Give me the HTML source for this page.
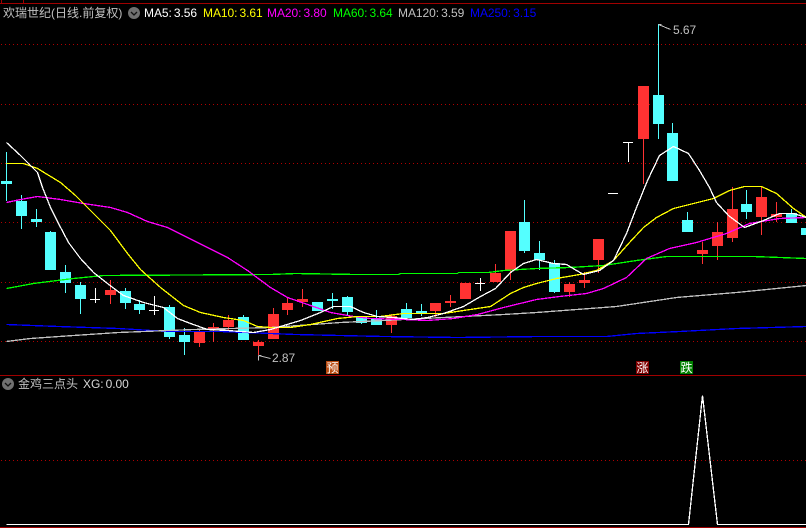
<!DOCTYPE html>
<html><head><meta charset="utf-8">
<style>
html,body{margin:0;padding:0;background:#000;width:806px;height:528px;overflow:hidden}
#w{position:relative;width:806px;height:528px;background:#000;overflow:hidden}
svg{position:absolute;left:0;top:0}
.t{position:absolute;white-space:nowrap;font:12px/14px "WenQuanYi Zen Hei","Liberation Sans","Noto Sans CJK SC",sans-serif;color:#c0c0c0}
.l{font-family:"Liberation Sans","WenQuanYi Zen Hei",sans-serif;word-spacing:-1.2px;letter-spacing:-.05px}
.b{position:absolute;width:13px;height:13px;top:361px;color:#fff;font:12px/13px "WenQuanYi Zen Hei","Noto Sans CJK SC",sans-serif;text-align:center}
</style></head><body><div id="w">
<svg width="806" height="528" viewBox="0 0 806 528" shape-rendering="crispEdges">
<defs><pattern id="d" width="4" height="1" patternUnits="userSpaceOnUse" x="1" y="0"><rect width="1" height="1" fill="#b00000"/></pattern></defs>
<path fill="#a00000" d="M0 3h806v1H0zM1 0h1v3H1zM23 0h1v3h-1zM0 375h806v1H0zM0 527h806v1H0z"/>
<g fill="url(#d)">
<rect x="0" y="44" width="806" height="1"/><rect x="0" y="104" width="806" height="1"/><rect x="0" y="163" width="806" height="1"/><rect x="0" y="222" width="806" height="1"/><rect x="0" y="282" width="806" height="1"/><rect x="0" y="341" width="806" height="1"/><rect x="0" y="460" width="806" height="1"/>
</g>
<path fill="#54ffff" d="M6 152h1v49h-1zM1 181h11v3H1zM21 195h1v34h-1zM16 201h11v15H16zM36 209h1v18h-1zM31 219h11v3H31zM50 231h1v2h-1zM45 232h11v38H45zM65 265h1v28h-1zM60 272h11v11H60zM80 282h1v32h-1zM75 285h11v14H75zM125 288h1v21h-1zM120 291h11v12h-11zM139 300h1v14h-1zM134 304h11v6h-11zM169 305h1v34h-1zM164 307h11v30h-11zM184 328h1v27h-1zM179 335h11v7h-11zM243 315h1v25h-1zM238 317h11v23h-11zM312 302h11v9h-11zM332 293h1v16h-1zM327 299h11v2h-11zM347 296h1v20h-1zM342 297h11v15h-11zM361 317h1v7h-1zM356 317h11v6h-11zM376 310h1v15h-1zM371 318h11v7h-11zM406 303h1v16h-1zM401 309h11v9h-11zM421 304h1v12h-1zM416 311h11v3h-11zM524 200h1v53h-1zM519 222h11v29h-11zM539 241h1v29h-1zM534 253h11v7h-11zM554 260h1v33h-1zM549 263h11v29h-11zM658 24h1v115h-1zM653 95h11v29h-11zM672 123h1v10h-1zM667 133h11v48h-11zM687 212h1v8h-1zM682 220h11v12h-11zM746 190h1v29h-1zM741 204h11v8h-11zM791 209h1v4h-1zM786 213h11v10h-11zM801 228h5v7h-5z"/>
<path fill="#ff3232" d="M110 280h1v24h-1zM105 290h11v5h-11zM199 330h1v17h-1zM194 332h11v11h-11zM213 323h1v19h-1zM208 327h11v3h-11zM228 315h1v15h-1zM223 320h11v7h-11zM258 340h1v15h-1zM253 342h11v4h-11zM273 308h1v6h-1zM268 314h11v25h-11zM287 297h1v18h-1zM282 303h11v7h-11zM302 289h1v18h-1zM297 299h11v3h-11zM391 314h1v19h-1zM386 316h11v9h-11zM435 303h1v14h-1zM430 303h11v8h-11zM450 295h1v12h-1zM445 301h11v2h-11zM460 283h11v16h-11zM495 264h1v18h-1zM490 273h11v9h-11zM510 270h1v10h-1zM505 231h11v39h-11zM569 282h1v15h-1zM564 284h11v8h-11zM584 272h1v16h-1zM579 280h11v3h-11zM598 260h1v13h-1zM593 239h11v21h-11zM643 139h1v45h-1zM638 86h11v53h-11zM702 242h1v22h-1zM697 250h11v4h-11zM717 222h1v38h-1zM712 232h11v14h-11zM732 187h1v55h-1zM727 209h11v29h-11zM761 187h1v48h-1zM756 197h11v20h-11zM776 202h1v20h-1zM771 214h11v3h-11z"/>
<path fill="#fff" d="M90 299h10v1H90zM95 288h1v15h-1zM149 310h10v1h-10zM154 296h1v19h-1zM475 283h10v1h-10zM480 278h1v13h-1zM608 193h10v1h-10zM623 142h10v1h-10zM628 142h1v20h-1z"/>
<g fill="none" stroke-width="1.3" transform="translate(.5 .5)">
<polyline stroke="#0000ff" points="6,324 58,326 118,328 167,331 220,331 270,333 295,334 383,336 457,337 540,336 606,336 636,333 679,331 736,328 806,326"/>
<polyline stroke="#c0c0c0" points="6,341 30,338 73,335 118,332 193,329 270,327 340,322 383,320 443,317 503,314 536,312 576,309 616,306 676,297 736,292 806,285"/>
<polyline stroke="#00ff00" points="6,288 33,283 73,278 103,275 270,274 295,273 355,274 398,274 400,273 457,273 458,272 488,272 503,270 536,268 569,267 603,265 636,260 666,256 726,256 753,256 806,258"/>
<polyline stroke="#ff00ff" points="6,202 20,199 37,196 60,199 83,203 110,207 127,212 147,221 167,227 197,242 227,257 247,270 270,287 287,297 310,305 330,312 353,316 370,318 403,319 427,320 453,318 477,314 503,307 536,299 559,296 586,293 603,288 626,277 646,258 669,248 696,242 726,233 749,223 779,218 806,217"/>
<polyline stroke="#ffff00" points="6,163 23,163 37,168 60,182 75,195 93,213 110,230 127,253 140,269 160,287 183,305 200,312 223,317 243,320 257,326 270,327 290,327 310,324 337,318 357,316 380,316 403,313 443,313 463,310 490,306 510,293 523,287 536,283 556,278 579,274 596,270 613,260 629,242 643,227 656,217 673,208 713,198 729,190 744,186 761,186 776,193 793,208 806,217"/>
<polyline stroke="#ffffff" points="6,142 20,155 30,165 37,172 42,187 50,207 58,223 68,242 80,258 93,272 107,283 123,295 143,302 163,307 177,318 190,323 207,329 227,330 253,332 270,329 280,326 300,320 320,312 333,306 350,306 363,312 377,316 393,317 413,319 427,317 443,313 463,306 480,296 495,288 510,272 523,263 536,259 553,263 566,264 576,270 583,274 599,270 613,260 626,233 636,207 647,180 659,155 673,146 688,153 699,170 709,187 716,202 728,215 744,227 763,220 779,213 793,213 806,217"/>
<polyline stroke="#ffffff" points="6,524 688,524 702,395 717,524 806,524"/>
<path stroke="#c0c0c0" stroke-width="1" d="M658 24H661M658 24L670 29M258 355H261M258 355V360M258 355L270 358"/>
</g>
<circle cx="134" cy="13" r="6" fill="#707070" shape-rendering="auto"/>
<path d="M131 12l3 3 3-3" fill="none" stroke="#111" stroke-width="1.3" shape-rendering="auto"/>
<circle cx="8" cy="384" r="6" fill="#707070" shape-rendering="auto"/>
<path d="M5 383l3 3 3-3" fill="none" stroke="#111" stroke-width="1.3" shape-rendering="auto"/>
</svg>
<div class="t" style="left:3px;top:6px">欢瑞世纪(日线.前复权)</div>
<div class="t l" style="left:144px;top:6px;color:#fff">MA5: 3.56</div>
<div class="t l" style="left:203px;top:6px;color:#ff0">MA10: 3.61</div>
<div class="t l" style="left:267px;top:6px;color:#f0f">MA20: 3.80</div>
<div class="t l" style="left:333px;top:6px;color:#0f0">MA60: 3.64</div>
<div class="t l" style="left:398px;top:6px;color:#c0c0c0">MA120: 3.59</div>
<div class="t l" style="left:470px;top:6px;color:#00f">MA250: 3.15</div>
<div class="t l" style="left:673px;top:23px">5.67</div>
<div class="t l" style="left:272px;top:351px">2.87</div>
<div class="b" style="left:326px;background:#b84a10">预</div>
<div class="b" style="left:636px;background:#800000">涨</div>
<div class="b" style="left:680px;background:#008000">跌</div>
<div class="t" style="left:18px;top:377px">金鸡三点头</div>
<div class="t l" style="left:83px;top:377px;color:#d8d8d8">XG: 0.00</div>
</div></body></html>
